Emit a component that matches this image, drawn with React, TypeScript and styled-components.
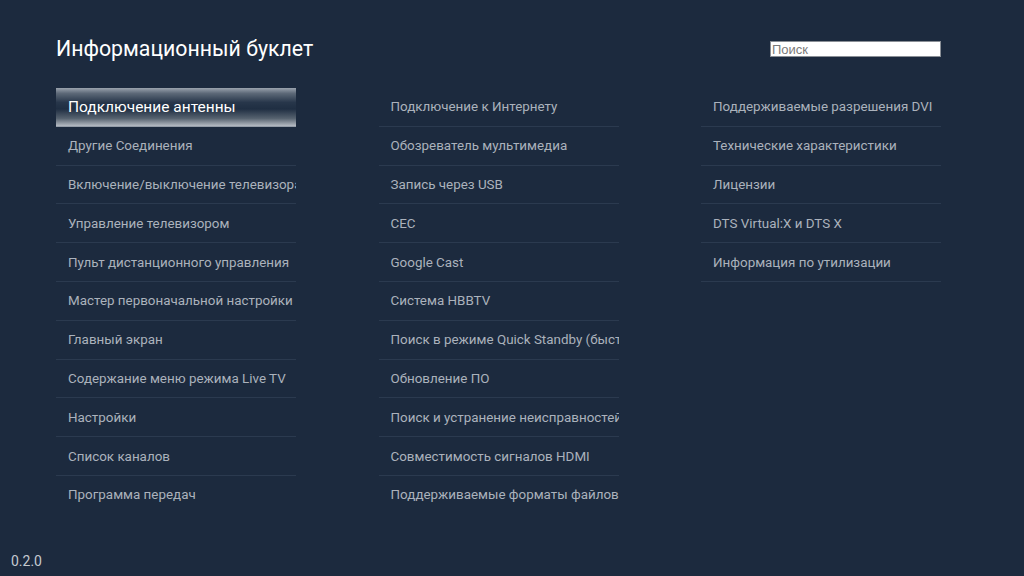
import React from 'react';
import styled, { createGlobalStyle } from 'styled-components';

const GlobalStyle = createGlobalStyle`
  html, body {
    margin: 0;
    padding: 0;
    background: #1c2a3e;
  }
  body {
    font-family: Roboto, "Noto Sans", sans-serif;
  }
`;

const Screen = styled.div`
  position: relative;
  width: 1024px;
  height: 576px;
  background: #1c2a3e;
  overflow: hidden;
  box-sizing: border-box;
  padding: 33px 83px 0 56px;
`;

const Header = styled.header`
  display: flex;
  justify-content: space-between;
  align-items: flex-start;
  height: 55px;
`;

const Title = styled.h1`
  margin: 0;
  font-family: Roboto, sans-serif;
  font-weight: 400;
  font-size: 21.3px;
  line-height: 32px;
  color: #ffffff;
`;

const Search = styled.input`
  margin-top: 8px;
  width: 171px;
  height: 16px;
  box-sizing: border-box;
  padding: 0 1px;
  border: 1px solid #8a8f96;
  background: #ffffff;
  font-family: "Liberation Sans", Arial, sans-serif;
  font-size: 13px;
  color: #333;
  outline: none;

  &::placeholder {
    color: #7a7a7a;
  }
`;

const Columns = styled.div`
  display: grid;
  grid-template-columns: repeat(3, 240px);
  justify-content: space-between;
`;

const List = styled.ul`
  list-style: none;
  margin: 0;
  padding: 0;
  max-height: 426px;
  overflow: hidden;
`;

const Item = styled.li<{ $active?: boolean }>`
  height: 38.8px;
  box-sizing: border-box;
  padding: 0 0 0 12px;
  display: flex;
  align-items: center;
  white-space: nowrap;
  overflow: hidden;
  color: ${p => (p.$active ? '#ffffff' : '#abb2bc')};
  border-bottom: 1px solid ${p => (p.$active ? 'transparent' : '#2b3a4f')};
  background: ${p =>
    p.$active
      ? 'linear-gradient(180deg, #9aa3ae 0%, #5d6978 14%, #27364a 38%, #1f2e42 55%, #56626f 80%, #b5bbc3 100%)'
      : 'transparent'};
  font-size: ${p => (p.$active ? '15.5px' : '13.4px')};
`;

const Version = styled.div`
  position: absolute;
  left: 11px;
  bottom: 7px;
  font-size: 14px;
  color: #c4c9d0;
`;

const columns: string[][] = [
  [
    'Подключение антенны',
    'Другие Соединения',
    'Включение/выключение телевизора',
    'Управление телевизором',
    'Пульт дистанционного управления',
    'Мастер первоначальной настройки',
    'Главный экран',
    'Содержание меню режима Live TV',
    'Настройки',
    'Список каналов',
    'Программа передач',
  ],
  [
    'Подключение к Интернету',
    'Обозреватель мультимедиа',
    'Запись через USB',
    'CEC',
    'Google Cast',
    'Система HBBTV',
    'Поиск в режиме Quick Standby (быстрый режим ожидания)',
    'Обновление ПО',
    'Поиск и устранение неисправностей',
    'Совместимость сигналов HDMI',
    'Поддерживаемые форматы файлов',
  ],
  [
    'Поддерживаемые разрешения DVI',
    'Технические характеристики',
    'Лицензии',
    'DTS Virtual:X и DTS X',
    'Информация по утилизации',
  ],
];

export default function App() {
  return (
    <>
      <GlobalStyle />
      <Screen>
        <Header>
          <Title>Информационный буклет</Title>
          <Search placeholder="Поиск" />
        </Header>
        <Columns>
          {columns.map((items, ci) => (
            <List key={ci}>
              {items.map((label, i) => (
                <Item key={label} $active={ci === 0 && i === 0}>
                  {label}
                </Item>
              ))}
            </List>
          ))}
        </Columns>
        <Version>0.2.0</Version>
      </Screen>
    </>
  );
}
